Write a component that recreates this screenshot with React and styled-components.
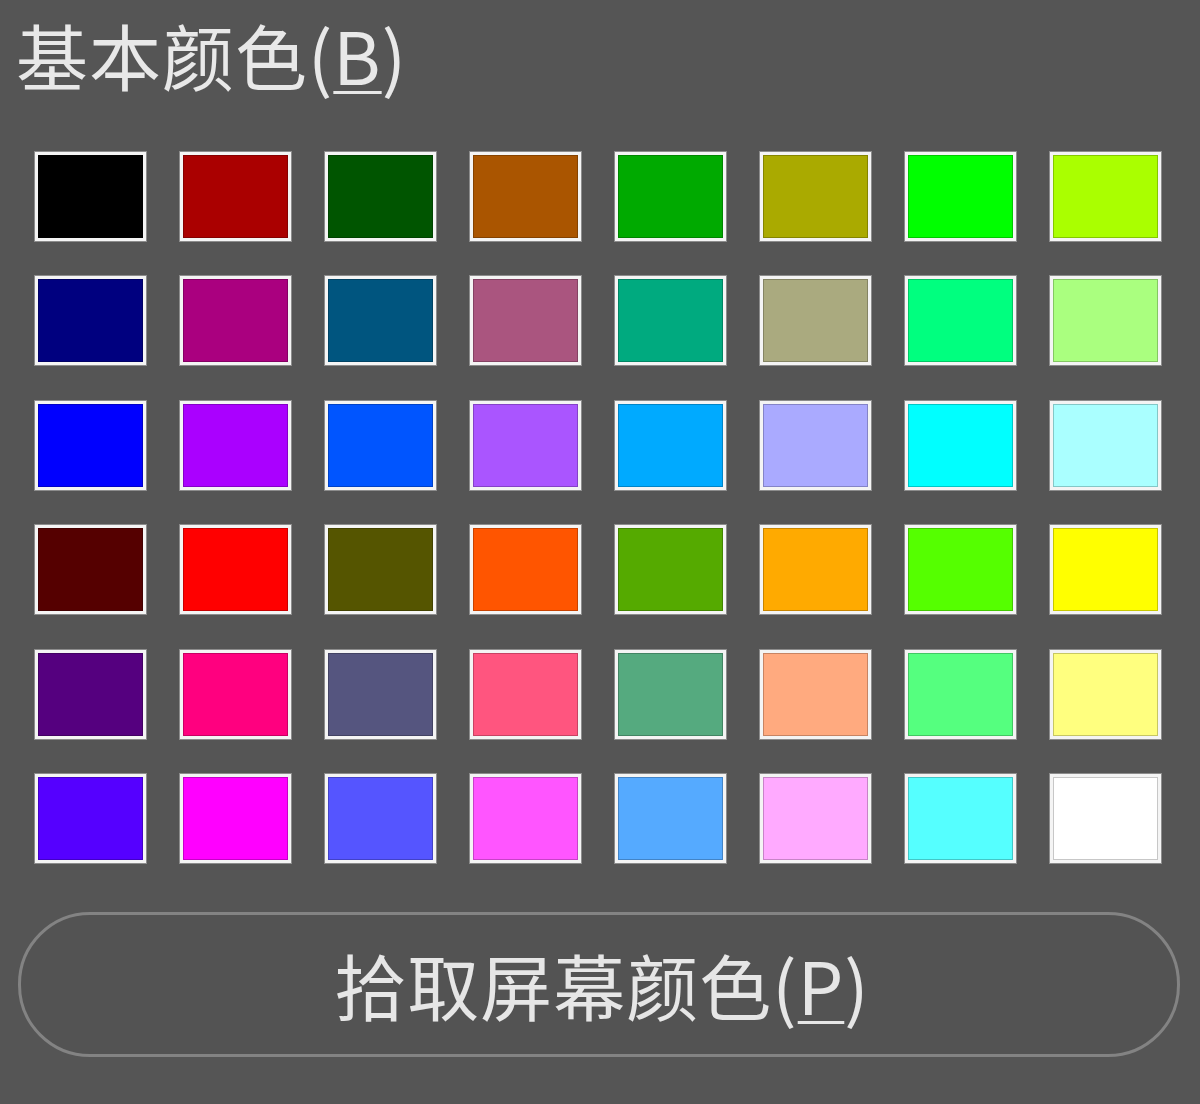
import React from "react";
import styled, { createGlobalStyle } from "styled-components";

const Global = createGlobalStyle`
  html, body { margin: 0; padding: 0; background: #555555; }
  body { font-family: "Noto Sans CJK SC", "Noto Sans", sans-serif; }
`;

const Panel = styled.div`
  width: 1200px;
  height: 1104px;
  box-sizing: border-box;
  padding: 18px 20px 0 18px;
  background: #555555;
  display: flex;
  flex-direction: column;
  overflow: hidden;
`;

const Title = styled.div`
  font-size: 72px;
  line-height: 72px;
  height: 72px;
  margin-left: -2px;
  color: #e8e8e8;
  white-space: nowrap;
  letter-spacing: 1px;
`;

const Mnemonic = styled.span`
  text-decoration: underline;
  text-decoration-thickness: 3px;
  text-underline-offset: 6px;
`;

const Grid = styled.div`
  margin: 62px 0 0 17px;
  display: grid;
  grid-template-columns: repeat(8, 111px);
  grid-template-rows: repeat(6, 89px);
  grid-auto-flow: column;
  column-gap: 34px;
  row-gap: 35.4px;
`;

const Swatch = styled.div`
  box-sizing: border-box;
  width: 111px;
  height: 89px;
  background: ${(p) => p.$color};
  border: 3px solid #f4f4f4;
  box-shadow: 0 0 0 1px #8c8c8c, inset 0 0 0 1px rgba(0, 0, 0, 0.22);
`;

const PickButton = styled.button`
  margin-top: 49px;
  box-sizing: border-box;
  width: 1162px;
  height: 145px;
  border: 3px solid #838383;
  border-radius: 72px;
  background: #535353;
  color: #e6e6e6;
  font-family: "Noto Sans CJK SC", "Noto Sans", sans-serif;
  font-size: 72px;
  line-height: 72px;
  padding: 0 0 0 6px;
  display: flex;
  align-items: center;
  justify-content: center;
  letter-spacing: 1px;
`;

const colors = [];
for (let g = 0; g < 4; ++g)
  for (let r = 0; r < 4; ++r)
    for (let b = 0; b < 3; ++b)
      colors.push(
        `rgb(${Math.floor((r * 255) / 3)}, ${Math.floor((g * 255) / 3)}, ${Math.floor((b * 255) / 2)})`
      );

export default function App() {
  return (
    <>
      <Global />
      <Panel>
        <Title>
          基本颜色(<Mnemonic>B</Mnemonic>)
        </Title>
        <Grid>
          {colors.map((c, i) => (
            <Swatch key={i} $color={c} />
          ))}
        </Grid>
        <PickButton>
          拾取屏幕颜色(<Mnemonic>P</Mnemonic>)
        </PickButton>
      </Panel>
    </>
  );
}
